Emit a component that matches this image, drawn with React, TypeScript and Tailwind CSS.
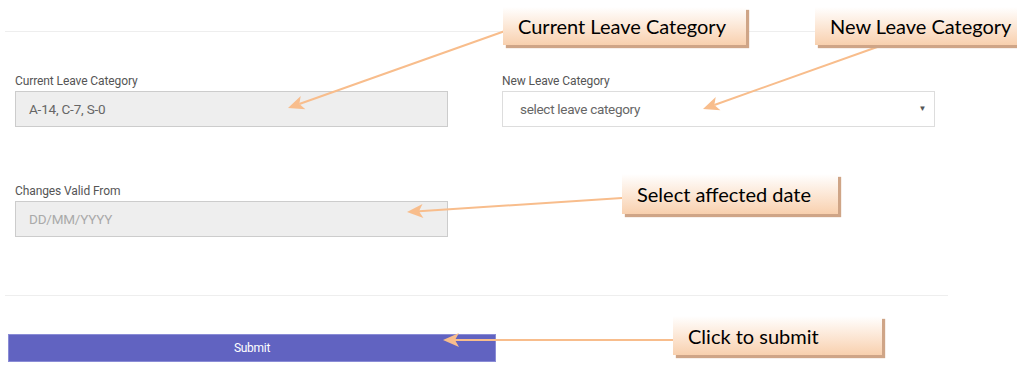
import React from 'react'

function Callout({ text, className }: { text: string; className: string }) {
  return (
    <div
      className={`absolute flex items-center pl-[15px] bg-gradient-to-b from-white to-[#f8d0ae] shadow-[3px_3px_1px_#cfa587] font-['Lato',sans-serif] text-[20px] text-black whitespace-nowrap ${className}`}
    >
      {text}
    </div>
  )
}

// arrow from (x1,y1) to tip (x2,y2)
function Arrow({ x1, y1, x2, y2 }: { x1: number; y1: number; x2: number; y2: number }) {
  const dx = x1 - x2
  const dy = y1 - y2
  const len = Math.hypot(dx, dy)
  const ux = dx / len
  const uy = dy / len
  const px = -uy
  const py = ux
  const L = 16
  const W = 7
  const bx = x2 + ux * L
  const by = y2 + uy * L
  const nx = x2 + ux * (L - 4)
  const ny = y2 + uy * (L - 4)
  const pts = `${x2},${y2} ${bx + px * W},${by + py * W} ${nx},${ny} ${bx - px * W},${by - py * W}`
  return (
    <g>
      <line x1={x1} y1={y1} x2={nx} y2={ny} stroke="#f8bd8c" strokeWidth="2" />
      <polygon points={pts} fill="#f8bd8c" />
    </g>
  )
}

export default function App() {
  return (
    <div className="relative w-[1017px] h-[381px] bg-white overflow-hidden font-['Roboto',sans-serif]">
      <div className="pt-[31px]">
        <div className="ml-[5px] h-px bg-[#eeeeee]" />

        <div className="mt-[42px] pl-[15px] grid grid-cols-[433px_433px] gap-x-[54px] gap-y-[57px]">
          <div>
            <label className="block h-[14px] text-[12px] leading-[14px] text-[#555] tracking-[-0.1px]">
              Current Leave Category
            </label>
            <div className="mt-[3px] h-[36px] flex items-center px-[13px] bg-[#eeeeee] border border-[#cccccc] text-[13.5px] text-[#666] tracking-[-0.2px]">
              A-14, C-7, S-0
            </div>
          </div>

          <div>
            <label className="block h-[14px] text-[12px] leading-[14px] text-[#555] tracking-[-0.1px]">
              New Leave Category
            </label>
            <div className="mt-[3px] h-[36px] flex items-center justify-between pl-[17px] pr-[8px] bg-white border border-[#dddddd] text-[13.5px] text-[#666] tracking-[-0.3px]">
              <span>select leave category</span>
              <span className="text-[8px] text-[#555]">▼</span>
            </div>
          </div>

          <div>
            <label className="block h-[14px] text-[12px] leading-[14px] text-[#555] tracking-[-0.1px]">
              Changes Valid From
            </label>
            <div className="mt-[3px] h-[36px] flex items-center px-[13px] bg-[#eeeeee] border border-[#cccccc] text-[13.5px] text-[#aaa] tracking-[-0.2px]">
              DD/MM/YYYY
            </div>
          </div>
        </div>

        <div className="mt-[58px] ml-[5px] w-[943px] h-px bg-[#eeeeee]" />

        <div className="mt-[38px] ml-[8px] w-[488px] h-[28px] flex items-center justify-center bg-[#6163c1] border border-[#8a8cd6] text-white text-[12px] tracking-[-0.3px]">
          Submit
        </div>
      </div>

      <svg className="absolute inset-0 pointer-events-none" width="1017" height="381">
        <Arrow x1={505} y1={31} x2={288} y2={108} />
        <Arrow x1={880} y1={46} x2={703} y2={109} />
        <Arrow x1={622} y1={198} x2={407} y2={212} />
        <Arrow x1={673} y1={340} x2={443} y2={340} />
      </svg>

      <Callout text="Current Leave Category" className="left-[503px] top-[7px] w-[243px] h-[38px]" />
      <Callout text="New Leave Category" className="left-[815px] top-[7px] w-[210px] h-[38px]" />
      <Callout text="Select affected date" className="left-[622px] top-[174px] w-[216px] h-[40px]" />
      <Callout text="Click to submit" className="left-[673px] top-[316px] w-[209px] h-[39px]" />
    </div>
  )
}
